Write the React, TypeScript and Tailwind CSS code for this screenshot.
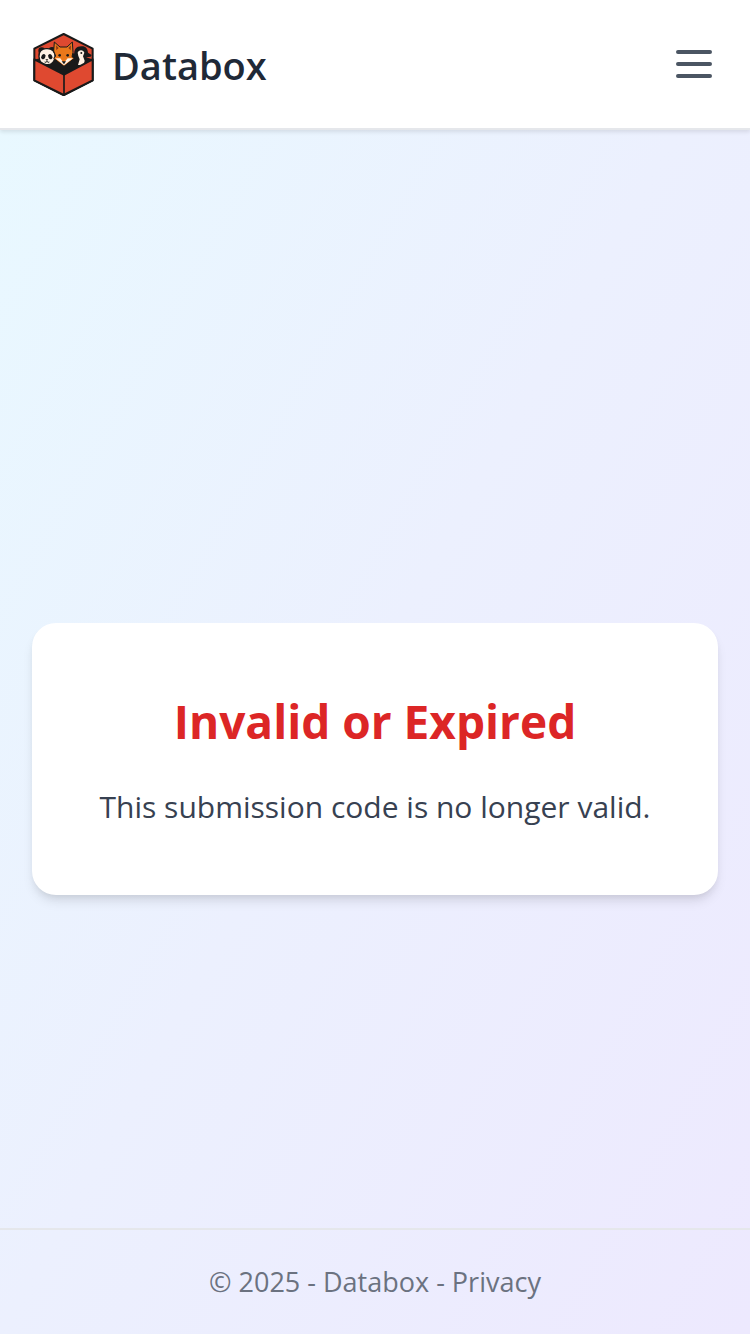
function Logo() {
  return (
    <svg viewBox="0 0 240 240" className="size-20" aria-hidden="true">
      <path d="M119 30 206 74V169L119 213 31 169V74Z" fill="#df4930" stroke="#191a1a" strokeWidth="6" strokeLinejoin="round" />
      <path d="M34 106 90 96 149 88 205 106 120 152Z" fill="#191a1a" />
      <g stroke="#191a1a" strokeWidth="4">
        <circle cx="53" cy="80" r="8" fill="#191a1a" />
        <circle cx="84" cy="79" r="8" fill="#191a1a" />
        <path d="M45 98C43 82 55 73 68 74C85 73 94 84 93 99C91 116 79 123 67 122C55 122 46 113 45 98Z" fill="#fff2e4" />
      </g>
      <ellipse cx="58" cy="98" rx="6" ry="8" transform="rotate(30 58 98)" fill="#191a1a" />
      <ellipse cx="79" cy="98" rx="6" ry="8" transform="rotate(-30 79 98)" fill="#191a1a" />
      <path d="m64 106 9 0-4 5Z" fill="#191a1a" />
      <path d="M62 114q4 3 7-2 3 5 7 2" fill="none" stroke="#191a1a" strokeWidth="3" />
      <path d="M91 54 108 69H129L145 54 147 85 144 98 151 103 120 127 89 103 95 96 89 81Z" fill="#ea781b" stroke="#191a1a" strokeWidth="3" strokeLinejoin="round" />
      <path d="m96 64 8 8-7 7ZM141 64l-8 8 7 7Z" fill="#8a3a18" />
      <path d="M94 103 109 103 119 117 131 103 147 103 120 124Z" fill="#fff2e4" />
      <circle cx="107" cy="94" r="4" fill="#191a1a" />
      <circle cx="131" cy="94" r="4" fill="#191a1a" />
      <path d="m113 112 13 0-6 9Z" fill="#191a1a" />
      <path d="M151 94C149 76 157 67 172 67C185 66 191 74 192 86L203 93 200 98 187 100 191 122H152Z" fill="#191a1a" />
      <path d="M161 86C163 76 179 76 181 86L177 97 182 110 179 123H162L167 106 163 96Z" fill="#fff2e4" />
      <circle cx="172" cy="87" r="3" fill="#191a1a" />
      <path d="M31 106 120 152 206 106V169L119 213 31 169Z" fill="#df4930" stroke="#191a1a" strokeWidth="6" strokeLinejoin="round" />
      <path d="M120 152V213" stroke="#191a1a" strokeWidth="5" />
    </svg>
  );
}

export default function App() {
  return (
    <div className="flex min-h-screen flex-col bg-linear-to-br from-[#e8f9ff] via-[#ecf0fe] to-[#ede9fe] font-['Open_Sans',sans-serif]">
      <header className="flex h-[130px] items-center justify-between border-b-2 border-[#e5e7eb] bg-white px-6 shadow-[0_2px_4px_rgba(0,0,0,0.1)]">
        <a href="#" className="flex items-center gap-2 text-[38px] leading-14 font-semibold text-[#1f2937]">
          <Logo />
          <span className="pt-0.5">Databox</span>
        </a>
        <button type="button" aria-label="Open menu" className="flex size-16 items-center justify-center text-[#4b5563]">
          <svg viewBox="0 0 24 24" className="size-12" fill="none" stroke="currentColor" strokeWidth="2" strokeLinecap="round" aria-hidden="true">
            <path d="M4 6h16M4 12h16M4 18h16" />
          </svg>
        </button>
      </header>
      <main className="flex grow items-center justify-center px-8 pt-48 pb-8">
        <section className="w-full rounded-3xl bg-white px-8 pt-16 pb-15 text-center shadow-[0_8px_12px_-2px_rgba(0,0,0,0.1),0_4px_8px_-4px_rgba(0,0,0,0.1)]">
          <h1 className="mb-6 text-[46px] leading-17 font-bold text-[#dc2626]">Invalid or Expired</h1>
          <p className="text-[30px] leading-14 text-[#374151]">This submission code is no longer valid.</p>
        </section>
      </main>
      <footer className="border-t-2 border-[#e5e7eb] px-8 py-8 text-center text-[27px] leading-10 text-[#6b7280]">
        © 2025 - Databox - <a href="#">Privacy</a>
      </footer>
    </div>
  );
}
